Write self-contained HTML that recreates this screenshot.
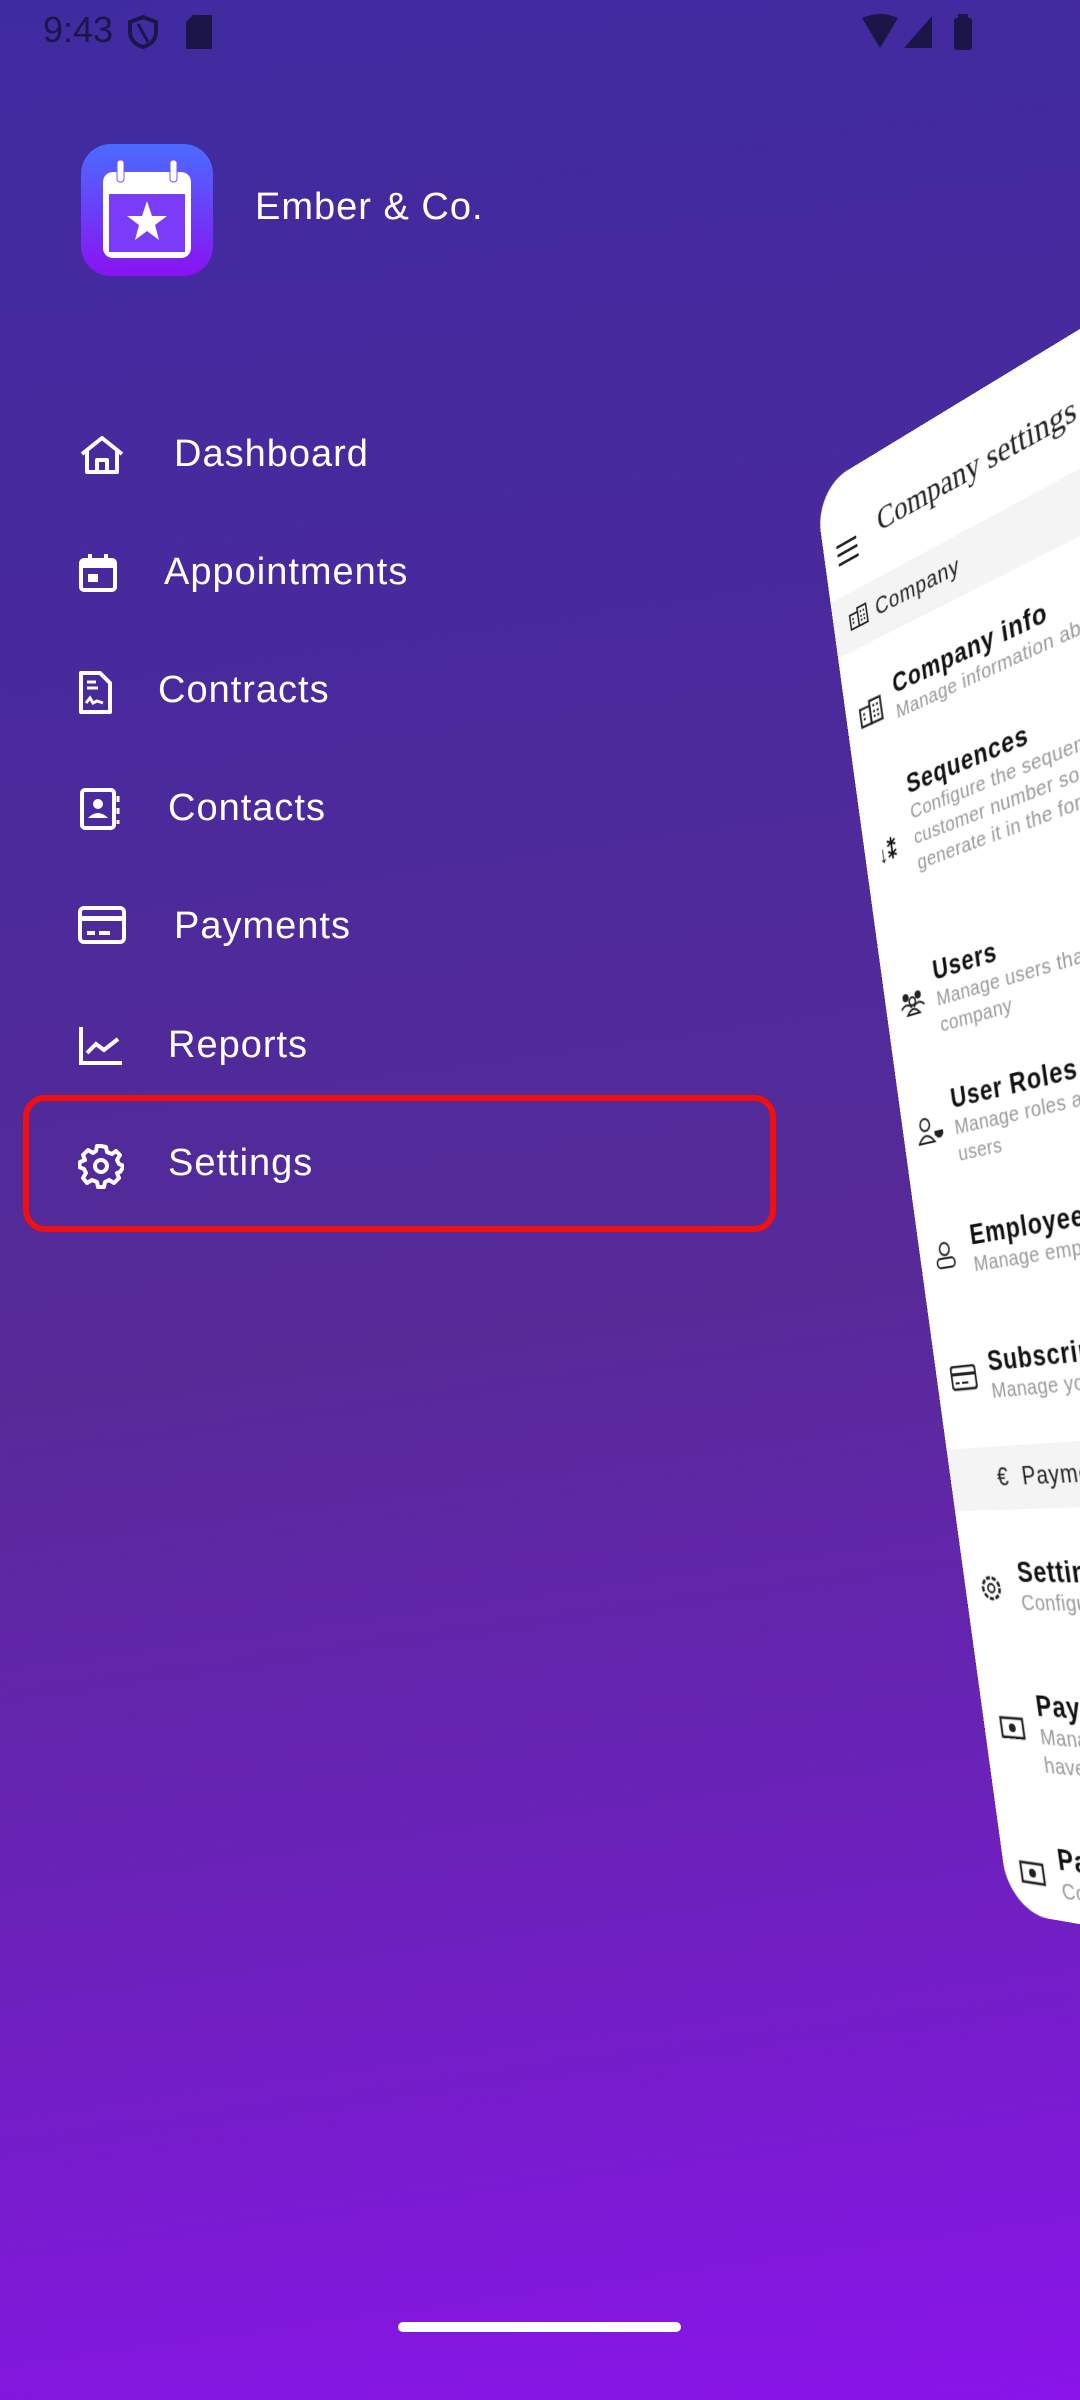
<!DOCTYPE html>
<html><head><meta charset="utf-8"><style>
*{margin:0;padding:0;box-sizing:border-box}
html,body{width:1080px;height:2400px;overflow:hidden}
body{position:relative;font-family:"Liberation Sans",sans-serif;background:linear-gradient(172deg,#3f2ba0 0%,#4a2a9c 30%,#572a98 55%,#6a22b8 75%,#8a14ea 100%)}
.sb{position:absolute;top:10px;left:43px;font-size:36px;color:#1c1548;line-height:40px}
.menu{position:absolute;left:0;color:#fff;font-size:38px;letter-spacing:1px;height:60px;line-height:60px;width:700px}
.menu svg{position:absolute;left:78px;top:10px}
.menu span{position:absolute}
.card{position:absolute;left:815px;top:490px;width:620px;height:1435px;background:#fff;border-radius:46px;transform-origin:0 0;transform:matrix3d(0.6832,-0.4153,0,-0.0003842, 0.12425,0.9062,0,-0.00005962, 0,0,1,0, 0,0,0,1);overflow:hidden;color:#111}
.card .t{position:absolute;font-family:"Liberation Serif",serif;font-size:34px;left:76px;top:50px;color:#222}
.sec{position:absolute;left:0;width:620px;height:60px;background:#f4f4f4;font-size:24px;line-height:60px;padding-left:58px;color:#222;letter-spacing:1px}
.it{position:absolute;left:66px;width:540px}
.it b{display:block;font-size:27px;letter-spacing:1px;color:#111}
.it i{display:block;font-style:normal;font-size:21px;color:#999;line-height:26px;letter-spacing:.5px}
.ic{position:absolute;left:18px}
</style></head><body>
<div class="sb">9:43</div>
<svg style="position:absolute;left:126px;top:14px" width="34" height="36" viewBox="0 0 34 36"><path d="M17 3 L30 8 V18 C30 26 24 31 17 33 C10 31 4 26 4 18 V8 Z" fill="none" stroke="#1c1548" stroke-width="4"/><path d="M12 10 L22 28" stroke="#1c1548" stroke-width="3"/></svg>
<svg style="position:absolute;left:186px;top:15px" width="26" height="34"><path d="M7 0 H26 V34 H0 V7 Z" fill="#1c1548"/></svg>
<svg style="position:absolute;left:862px;top:14px" width="120" height="36"><path d="M0 4 Q18 -4 36 4 L18 34 Z" fill="#1c1548"/><path d="M70 2 V34 H42 Z" fill="#1c1548"/><rect x="92" y="4" width="18" height="32" rx="3" fill="#1c1548"/><rect x="96" y="0" width="10" height="6" fill="#1c1548"/></svg>

<svg style="position:absolute;left:81px;top:144px" width="132" height="132" viewBox="0 0 132 132"><defs><linearGradient id="g" x1="0" y1="0" x2="0" y2="1"><stop offset="0" stop-color="#4a6cff"/><stop offset="1" stop-color="#8a12f2"/></linearGradient></defs><rect width="132" height="132" rx="30" fill="url(#g)"/><rect x="22" y="28" width="88" height="86" rx="10" fill="#fff"/><rect x="28" y="50" width="76" height="58" fill="#7a3cf8"/><rect x="36" y="16" width="7" height="22" rx="3" fill="#fff" stroke="#7a50ff" stroke-width="1"/><rect x="89" y="16" width="7" height="22" rx="3" fill="#fff" stroke="#7a50ff" stroke-width="1"/><path d="M66 57 L71 72 L86 72 L74 81 L78 96 L66 87 L54 96 L58 81 L46 72 L61 72 Z" fill="#fff"/></svg>
<div style="position:absolute;left:255px;top:186px;font-size:38px;color:#fff;letter-spacing:1px">Ember &amp; Co.</div>

<div class="menu" style="top:424px"><svg width="48" height="42" viewBox="0 0 48 42"><path d="M4 20 L24 4 L44 20 M9 16 V38 H39 V16 M19 38 V26 H29 V38" fill="none" stroke="#fff" stroke-width="4" stroke-linejoin="round"/></svg><span style="left:174px">Dashboard</span></div>
<div class="menu" style="top:542px"><svg width="42" height="42" viewBox="0 0 42 42"><rect x="3" y="8" width="34" height="30" rx="3" fill="none" stroke="#fff" stroke-width="4"/><rect x="3" y="8" width="34" height="8" fill="#fff"/><rect x="10" y="2" width="4" height="8" fill="#fff"/><rect x="26" y="2" width="4" height="8" fill="#fff"/><rect x="10" y="22" width="10" height="8" fill="#fff"/></svg><span style="left:164px">Appointments</span></div>
<div class="menu" style="top:660px"><svg width="42" height="46" viewBox="0 0 42 46"><path d="M3 3 H22 L32 13 V42 H3 Z" fill="none" stroke="#fff" stroke-width="4" stroke-linejoin="round"/><path d="M9 12 H18 M9 18 H20 M8 33 L12 28 L15 33 L19 31 L25 33" stroke="#fff" stroke-width="3" fill="none"/></svg><span style="left:158px">Contracts</span></div>
<div class="menu" style="top:778px"><svg width="44" height="44" viewBox="0 0 44 44"><rect x="4" y="2" width="32" height="38" rx="3" fill="none" stroke="#fff" stroke-width="4"/><circle cx="20" cy="16" r="5" fill="#fff"/><path d="M10 30 Q20 20 30 30 Z" fill="#fff"/><path d="M40 8 V14 M40 20 V26 M40 32 V36" stroke="#fff" stroke-width="3"/></svg><span style="left:168px">Contacts</span></div>
<div class="menu" style="top:896px"><svg width="50" height="40" viewBox="0 0 50 40"><rect x="2" y="2" width="44" height="34" rx="4" fill="none" stroke="#fff" stroke-width="4"/><rect x="2" y="10" width="44" height="5" fill="#fff"/><path d="M9 27 H17 M21 27 H32" stroke="#fff" stroke-width="4"/></svg><span style="left:174px">Payments</span></div>
<div class="menu" style="top:1015px"><svg width="46" height="42" viewBox="0 0 46 42"><path d="M3 2 V38 H44 M9 28 L18 19 L26 25 L40 14" fill="none" stroke="#fff" stroke-width="4"/></svg><span style="left:168px">Reports</span></div>
<div style="position:absolute;left:23px;top:1095px;width:753px;height:137px;border:6px solid #f01010;border-radius:22px"></div>
<div class="menu" style="top:1133px"><svg width="46" height="46" viewBox="0 0 46 46"><path d="M23 3 L28 4 L29 9 L34 11 L38 8 L42 12 L39 17 L41 21 L46 23 L42 29 L39 30 L41 35 L36 40 L31 37 L27 39 L26 44 L20 44 L19 39 L14 37 L9 40 L5 35 L8 30 L6 26 L1 24 L2 19 L7 17 L5 12 L10 7 L15 10 L18 8 L19 3 Z" fill="none" stroke="#fff" stroke-width="4" stroke-linejoin="round"/><circle cx="23" cy="23" r="6" fill="none" stroke="#fff" stroke-width="4"/></svg><span style="left:168px">Settings</span></div>

<div class="card">
 <div style="position:absolute;left:18px;top:70px;width:28px;height:22px;border-top:3px solid #222;border-bottom:3px solid #222"></div><div style="position:absolute;left:18px;top:79px;width:28px;height:3px;background:#222"></div>
 <div class="t">Company settings</div>
 <div class="sec" style="top:124px">Company</div>
 <svg class="ic" style="top:142px;left:22px" width="26" height="22" viewBox="0 0 26 22"><rect x="1" y="5" width="11" height="15" fill="none" stroke="#222" stroke-width="2"/><rect x="12" y="1" width="12" height="19" fill="none" stroke="#222" stroke-width="2"/><path d="M4 10h2M4 14h2M15 6h2M19 6h2M15 11h2M19 11h2M15 15h2M19 15h2" stroke="#222" stroke-width="2"/></svg>
 <svg class="ic" style="top:240px" width="32" height="28" viewBox="0 0 26 22"><rect x="1" y="5" width="11" height="15" fill="none" stroke="#222" stroke-width="2"/><rect x="12" y="1" width="12" height="19" fill="none" stroke="#222" stroke-width="2"/><path d="M4 10h2M4 14h2M15 6h2M19 6h2M15 11h2M19 11h2M15 15h2M19 15h2" stroke="#222" stroke-width="2"/></svg>
 <div class="it" style="top:222px"><b>Company info</b><i>Manage information about your company</i></div>
 <div class="ic" style="top:386px;font-size:24px;font-weight:bold">↓⁑</div>
 <div class="it" style="top:326px"><b>Sequences</b><i>Configure the sequence for the<br>customer number so the system can<br>generate it in the format you want</i></div>
 <svg class="ic" style="top:542px" width="34" height="26" viewBox="0 0 34 26"><circle cx="9" cy="7" r="4" fill="#222"/><circle cx="25" cy="7" r="4" fill="#222"/><circle cx="17" cy="12" r="4" fill="none" stroke="#222" stroke-width="2"/><path d="M2 18 Q9 11 16 18 M18 18 Q25 11 32 18 M9 25 Q17 15 25 25Z" fill="none" stroke="#222" stroke-width="2"/></svg>
 <div class="it" style="top:516px"><b>Users</b><i>Manage users that have access to the<br>company</i></div>
 <svg class="ic" style="top:670px" width="34" height="28" viewBox="0 0 34 28"><circle cx="11" cy="8" r="6" fill="none" stroke="#222" stroke-width="2"/><path d="M1 26 Q11 12 21 26Z" fill="none" stroke="#222" stroke-width="2"/><path d="M22 16 H33 V20 Q28 27 22 20Z" fill="#222"/></svg>
 <div class="it" style="top:644px"><b>User Roles</b><i>Manage roles and permissions of<br>users</i></div>
 <svg class="ic" style="top:794px" width="28" height="28" viewBox="0 0 28 28"><circle cx="14" cy="8" r="6" fill="none" stroke="#222" stroke-width="2"/><rect x="3" y="17" width="22" height="9" rx="4" fill="none" stroke="#222" stroke-width="2"/></svg>
 <div class="it" style="top:778px"><b>Employees</b><i>Manage employees</i></div>
 <svg class="ic" style="top:916px" width="32" height="26" viewBox="0 0 32 26"><rect x="1" y="1" width="30" height="22" rx="3" fill="none" stroke="#222" stroke-width="2.5"/><rect x="1" y="7" width="30" height="3" fill="#222"/><path d="M5 17h5M13 17h8" stroke="#222" stroke-width="2"/></svg>
 <div class="it" style="top:900px"><b>Subscription</b><i>Manage your subscription</i></div>
 <div class="sec" style="top:996px">€&nbsp; Payments</div>
 <svg class="ic" style="top:1116px" width="28" height="28" viewBox="0 0 28 28"><circle cx="14" cy="14" r="10" fill="none" stroke="#222" stroke-width="3" stroke-dasharray="5 2"/><circle cx="14" cy="14" r="4" fill="none" stroke="#222" stroke-width="2"/></svg>
 <div class="it" style="top:1100px"><b>Settings</b><i>Configure payments</i></div>
 <svg class="ic" style="top:1248px" width="32" height="26" viewBox="0 0 32 26"><rect x="3" y="4" width="26" height="18" fill="none" stroke="#222" stroke-width="2.5"/><circle cx="16" cy="13" r="4" fill="#222"/></svg>
 <div class="it" style="top:1224px"><b>Payment methods</b><i>Manage payment methods that you<br>have</i></div>
 <svg class="ic" style="top:1382px" width="32" height="26" viewBox="0 0 32 26"><rect x="3" y="4" width="26" height="18" fill="none" stroke="#222" stroke-width="2.5"/><circle cx="16" cy="13" r="4" fill="#222"/></svg>
 <div class="it" style="top:1364px"><b>Payouts</b><i>Configure payouts</i></div>
</div>

<div style="position:absolute;left:398px;top:2322px;width:283px;height:10px;border-radius:5px;background:#fff"></div>
</body></html>
